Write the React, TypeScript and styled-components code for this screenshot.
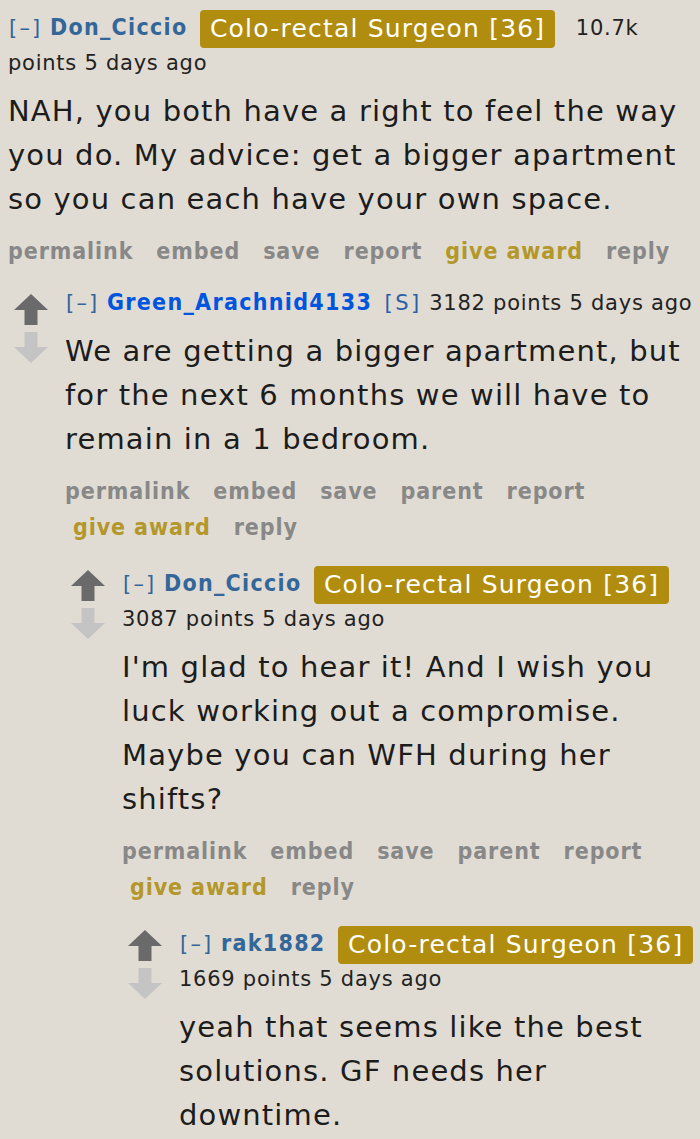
import * as React from 'react';
import styled, { createGlobalStyle } from 'styled-components';

const GlobalStyle = createGlobalStyle`
  html, body {
    margin: 0;
    padding: 0;
    background: #e1dcd3;
  }
  body {
    font-family: "DejaVu Sans", Verdana, sans-serif;
    color: #222;
    overflow: hidden;
  }
`;

type CommentData = {
  author: string,
  submitter?: boolean,
  flair?: string,
  score: string,
  time: string,
  body: string,
  actions: string[],
  children?: CommentData[],
}

const thread: CommentData = {
  author: 'Don_Ciccio',
  flair: 'Colo-rectal Surgeon [36]',
  score: '10.7k points',
  time: '5 days ago',
  body: 'NAH, you both have a right to feel the way you do. My advice: get a bigger apartment so you can each have your own space.',
  actions: ['permalink', 'embed', 'save', 'report', 'give award', 'reply'],
  children: [{
    author: 'Green_Arachnid4133',
    submitter: true,
    score: '3182 points',
    time: '5 days ago',
    body: 'We are getting a bigger apartment, but for the next 6 months we will have to remain in a 1 bedroom.',
    actions: ['permalink', 'embed', 'save', 'parent', 'report', 'give award', 'reply'],
    children: [{
      author: 'Don_Ciccio',
      flair: 'Colo-rectal Surgeon [36]',
      score: '3087 points',
      time: '5 days ago',
      body: "I'm glad to hear it! And I wish you luck working out a compromise. Maybe you can WFH during her shifts?",
      actions: ['permalink', 'embed', 'save', 'parent', 'report', 'give award', 'reply'],
      children: [{
        author: 'rak1882',
        flair: 'Colo-rectal Surgeon [36]',
        score: '1669 points',
        time: '5 days ago',
        body: 'yeah that seems like the best solutions. GF needs her downtime.',
        actions: [],
      }],
    }],
  }],
};

const UpArrow = ({ color }: { color: string }) => (
  <svg width="34" height="31" viewBox="0 0 34 31">
    <polygon points="17,0 34,16 23.5,16 23.5,31 10.5,31 10.5,16 0,16" fill={color} />
  </svg>
);

const DownArrow = ({ color }: { color: string }) => (
  <svg width="34" height="31" viewBox="0 0 34 31">
    <polygon points="17,31 34,15 23.5,15 23.5,0 10.5,0 10.5,15 0,15" fill={color} />
  </svg>
);

const Comment = ({ data, top }: { data: CommentData, top?: boolean }) => (
  <CommentRow $top={top}>
    {!top && (
      <Votes>
        <UpArrow color="#6a6a6a" />
        <DownArrow color="#c4c4c4" />
      </Votes>
    )}
    <Entry>
      <Tagline $flair={!!data.flair}>
        <Expand>[–]</Expand>{' '}
        <Author $submitter={data.submitter}>{data.author}</Author>{' '}
        {data.submitter && <><Submitter>[S]</Submitter>{' '}</>}
        {data.flair && <><Flair>{data.flair}</Flair>{' '}</>}
        {data.score} {data.time}
      </Tagline>
      <Body>{data.body}</Body>
      {data.actions.length > 0 && (
        <Actions>
          {data.actions.map((a) => (
            <Action key={a} $gold={a === 'give award'}>{a}</Action>
          ))}
        </Actions>
      )}
      {data.children?.map((c, i) => <Comment key={i} data={c} />)}
    </Entry>
  </CommentRow>
);

export default function App() {
  return (
    <>
      <GlobalStyle />
      <Page>
        <Comment data={thread} top />
      </Page>
    </>
  );
}

const Page = styled.div`
  padding: 5px 0 0 8px;
`;

const CommentRow = styled.div<{ $top?: boolean }>`
  display: flex;
  padding-top: ${(p) => (p.$top ? '0' : '16px')};
`;

const Votes = styled.div`
  flex: 0 0 57px;
  box-sizing: border-box;
  padding: 9px 0 0 6px;
  display: flex;
  flex-direction: column;
  gap: 7px;
`;

const Entry = styled.div`
  flex: 1;
  min-width: 0;
`;

const Tagline = styled.div<{ $flair?: boolean }>`
  margin-right: -10px;
  padding-top: ${(p) => (p.$flair ? '5px' : '0')};
  font-size: 21px;
  line-height: 35px;
  letter-spacing: 0.75px;
  color: #222;
`;

const Expand = styled.span`
  color: #369;
  letter-spacing: 2.2px;
  margin-left: 1px;
`;

const Author = styled.span<{ $submitter?: boolean }>`
  font-family: "DejaVu Sans Condensed", "DejaVu Sans", sans-serif;
  font-stretch: condensed;
  font-weight: bold;
  font-size: 23px;
  letter-spacing: 1.3px;
  color: ${(p) => (p.$submitter ? '#0055df' : '#369')};
`;

const Submitter = styled.span`
  color: #2a5fa8;
  letter-spacing: 2.5px;
  margin-left: 5px;
`;

const Flair = styled.span`
  display: inline-block;
  background: #b08d0e;
  color: #fff;
  font-size: 25px;
  line-height: 38px;
  letter-spacing: 1.2px;
  padding: 0 10px;
  border-radius: 4px;
  margin: -2px 13px -2px 5px;
  vertical-align: middle;
`;

const Body = styled.div`
  margin-top: 8px;
  padding-right: 6px;
  font-size: 29px;
  line-height: 44px;
  letter-spacing: 1.15px;
  color: #1c1c1c;
`;

const Actions = styled.ul`
  list-style: none;
  margin: 12px 0 0;
  padding: 0;
  display: flex;
  flex-wrap: wrap;
  font-family: "DejaVu Sans Condensed", "DejaVu Sans", sans-serif;
  font-stretch: condensed;
  font-weight: bold;
  font-size: 23px;
  line-height: 36px;
  letter-spacing: 0.9px;
`;

const Action = styled.li<{ $gold?: boolean }>`
  padding-left: 8px;
  margin-right: 15px;
  color: ${(p) => (p.$gold ? '#b3972a' : '#888')};
  &:first-child {
    padding-left: 0;
  }
`;
